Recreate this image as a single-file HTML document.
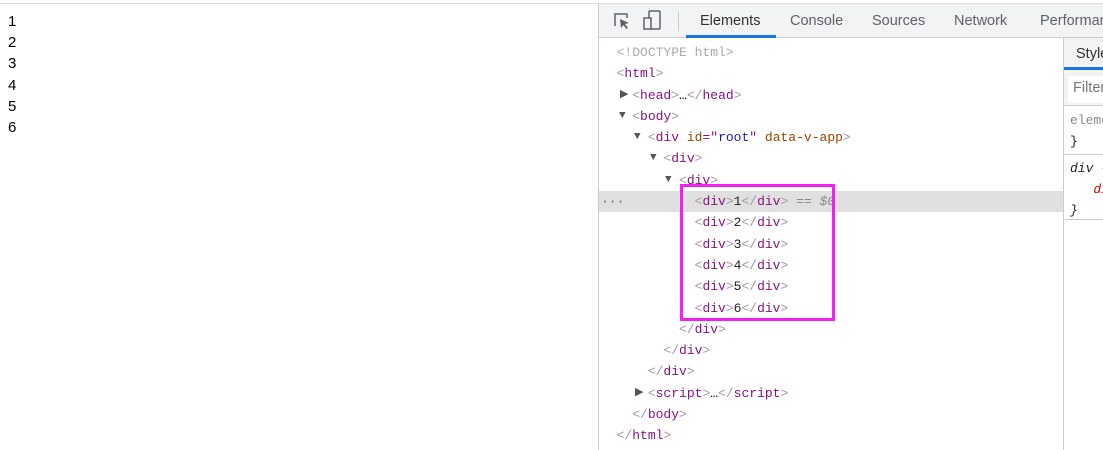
<!DOCTYPE html>
<html><head><style>
body{margin:0;width:1103px;height:450px;overflow:hidden;background:#fff;position:relative;font-family:"Liberation Sans",sans-serif}
.topline{position:absolute;left:0;top:3px;width:1103px;height:1px;background:#dadce0}
.nums{position:absolute;left:8px;top:11px;font-size:15px;line-height:21.2px;color:#000}
.dt{position:absolute;left:598px;top:4px;width:505px;height:446px;border-left:1px solid #cbcdd1;background:#fff}
.bar{position:absolute;left:0;top:0;width:505px;height:33px;background:#f1f3f4;border-bottom:1px solid #cbcdd1}
.tab{position:absolute;top:9px;font-size:14.5px;color:#5f6368}
.ul{position:absolute;left:87px;top:31px;width:90px;height:3px;background:#1a73e8}
.tree{position:absolute;left:2px;top:38px;width:462px;font-family:"Liberation Mono",monospace;font-size:13px;line-height:21.3px}
.row{height:21.3px;white-space:pre;position:relative}
.t{color:#881280}.b{color:#a894a6}.an{color:#994500}.av{color:#1a1aa6}.tx{color:#222}
.sel{background:#e0e0e0;margin-left:-2px;padding-left:2px}
.tri{position:absolute;font-size:11px;color:#555;top:0}
.box{position:absolute;left:81px;top:180px;width:149px;height:131px;border:3px solid #f31ff3}
.side{position:absolute;left:464px;top:34px;width:41px;height:412px;border-left:1px solid #cbcdd1}
</style></head><body>
<div class="topline"></div>
<div class="nums">1<br>2<br>3<br>4<br>5<br>6</div>
<div class="dt">
 <div class="bar">
  <svg style="position:absolute;left:13px;top:7px" width="20" height="20" viewBox="0 0 20 20"><path d="M3 15V3h12v4" fill="none" stroke="#5f6368" stroke-width="1.5"/><path d="M8 8l9 4-4 1 3 4-1.5 1-3-4-2.5 3z" fill="#5f6368"/></svg>
  <svg style="position:absolute;left:44px;top:6px" width="20" height="22" viewBox="0 0 20 22"><rect x="6" y="1" width="11" height="18" rx="1" fill="none" stroke="#5f6368" stroke-width="1.5"/><rect x="1" y="8" width="7" height="11" fill="#f1f3f4" stroke="#5f6368" stroke-width="1.5"/></svg>
  <div style="position:absolute;left:79px;top:7px;width:1px;height:20px;background:#cbcdd1"></div>
  <div class="tab" style="left:101px;color:#333">Elements</div>
  <div class="tab" style="left:191px">Console</div>
  <div class="tab" style="left:273px">Sources</div>
  <div class="tab" style="left:355px">Network</div>
  <div class="tab" style="left:441px">Performance</div>
  <div class="ul"></div>
 </div>
 <div class="tree">
  <div class="row">  <span style="color:#aaa">&lt;!DOCTYPE html&gt;</span></div>
  <div class="row">  <span class="b">&lt;</span><span class="t">html</span><span class="b">&gt;</span></div>
  <div class="row"><span class="tri" style="left:19px">▶</span>    <span class="b">&lt;</span><span class="t">head</span><span class="b">&gt;</span>…<span class="b">&lt;/</span><span class="t">head</span><span class="b">&gt;</span></div>
  <div class="row"><span class="tri" style="left:18px">▼</span>    <span class="b">&lt;</span><span class="t">body</span><span class="b">&gt;</span></div>
  <div class="row"><span class="tri" style="left:33px">▼</span>      <span class="b">&lt;</span><span class="t">div </span><span class="an">id</span><span class="t">="</span><span class="av">root</span><span class="t">"</span> <span class="an">data-v-app</span><span class="b">&gt;</span></div>
  <div class="row"><span class="tri" style="left:49px">▼</span>        <span class="b">&lt;</span><span class="t">div</span><span class="b">&gt;</span></div>
  <div class="row"><span class="tri" style="left:64px">▼</span>          <span class="b">&lt;</span><span class="t">div</span><span class="b">&gt;</span></div>
  <div class="row sel"><span style="position:absolute;left:2px;color:#666">···</span>            <span class="b">&lt;</span><span class="t">div</span><span class="b">&gt;</span><span class="tx">1</span><span class="b">&lt;/</span><span class="t">div</span><span class="b">&gt;</span> <span style="color:#888;font-style:italic">== $0</span></div>
  <div class="row">            <span class="b">&lt;</span><span class="t">div</span><span class="b">&gt;</span><span class="tx">2</span><span class="b">&lt;/</span><span class="t">div</span><span class="b">&gt;</span></div>
  <div class="row">            <span class="b">&lt;</span><span class="t">div</span><span class="b">&gt;</span><span class="tx">3</span><span class="b">&lt;/</span><span class="t">div</span><span class="b">&gt;</span></div>
  <div class="row">            <span class="b">&lt;</span><span class="t">div</span><span class="b">&gt;</span><span class="tx">4</span><span class="b">&lt;/</span><span class="t">div</span><span class="b">&gt;</span></div>
  <div class="row">            <span class="b">&lt;</span><span class="t">div</span><span class="b">&gt;</span><span class="tx">5</span><span class="b">&lt;/</span><span class="t">div</span><span class="b">&gt;</span></div>
  <div class="row">            <span class="b">&lt;</span><span class="t">div</span><span class="b">&gt;</span><span class="tx">6</span><span class="b">&lt;/</span><span class="t">div</span><span class="b">&gt;</span></div>
  <div class="row">          <span class="b">&lt;/</span><span class="t">div</span><span class="b">&gt;</span></div>
  <div class="row">        <span class="b">&lt;/</span><span class="t">div</span><span class="b">&gt;</span></div>
  <div class="row">      <span class="b">&lt;/</span><span class="t">div</span><span class="b">&gt;</span></div>
  <div class="row"><span class="tri" style="left:34px">▶</span>      <span class="b">&lt;</span><span class="t">script</span><span class="b">&gt;</span>…<span class="b">&lt;/</span><span class="t">script</span><span class="b">&gt;</span></div>
  <div class="row">    <span class="b">&lt;/</span><span class="t">body</span><span class="b">&gt;</span></div>
  <div class="row">  <span class="b">&lt;/</span><span class="t">html</span><span class="b">&gt;</span></div>
 </div>
 <div class="box"></div>
 <div class="side">
  <div style="position:absolute;left:0;top:0;width:41px;height:67px;background:#f1f3f4;border-bottom:1px solid #cbcdd1"></div>
  <div style="position:absolute;left:12px;top:8px;font-size:14.5px;color:#333">Styles</div>
  <div style="position:absolute;left:0;top:29px;width:41px;height:3px;background:#1a73e8"></div>
  <div style="position:absolute;left:4px;top:38px;width:37px;height:27px;background:#fff"></div>
  <div style="position:absolute;left:9px;top:42px;font-size:14.5px;color:#777">Filter</div>
  <div style="position:absolute;left:6px;top:72px;font-family:'Liberation Mono',monospace;font-size:13px;line-height:21px;color:#888">element<br><span style="color:#222">}</span></div>
  <div style="position:absolute;left:0;top:116px;width:41px;height:1px;background:#cbcdd1"></div>
  <div style="position:absolute;left:6px;top:120px;font-family:'Liberation Mono',monospace;font-size:13px;line-height:21px;color:#222;font-style:italic">div {<br>&nbsp;&nbsp;&nbsp;<span style="color:#c80000">di</span><br>}</div>
  <div style="position:absolute;left:0;top:181px;width:41px;height:1px;background:#cbcdd1"></div>
 </div>
</div>
</body></html>
